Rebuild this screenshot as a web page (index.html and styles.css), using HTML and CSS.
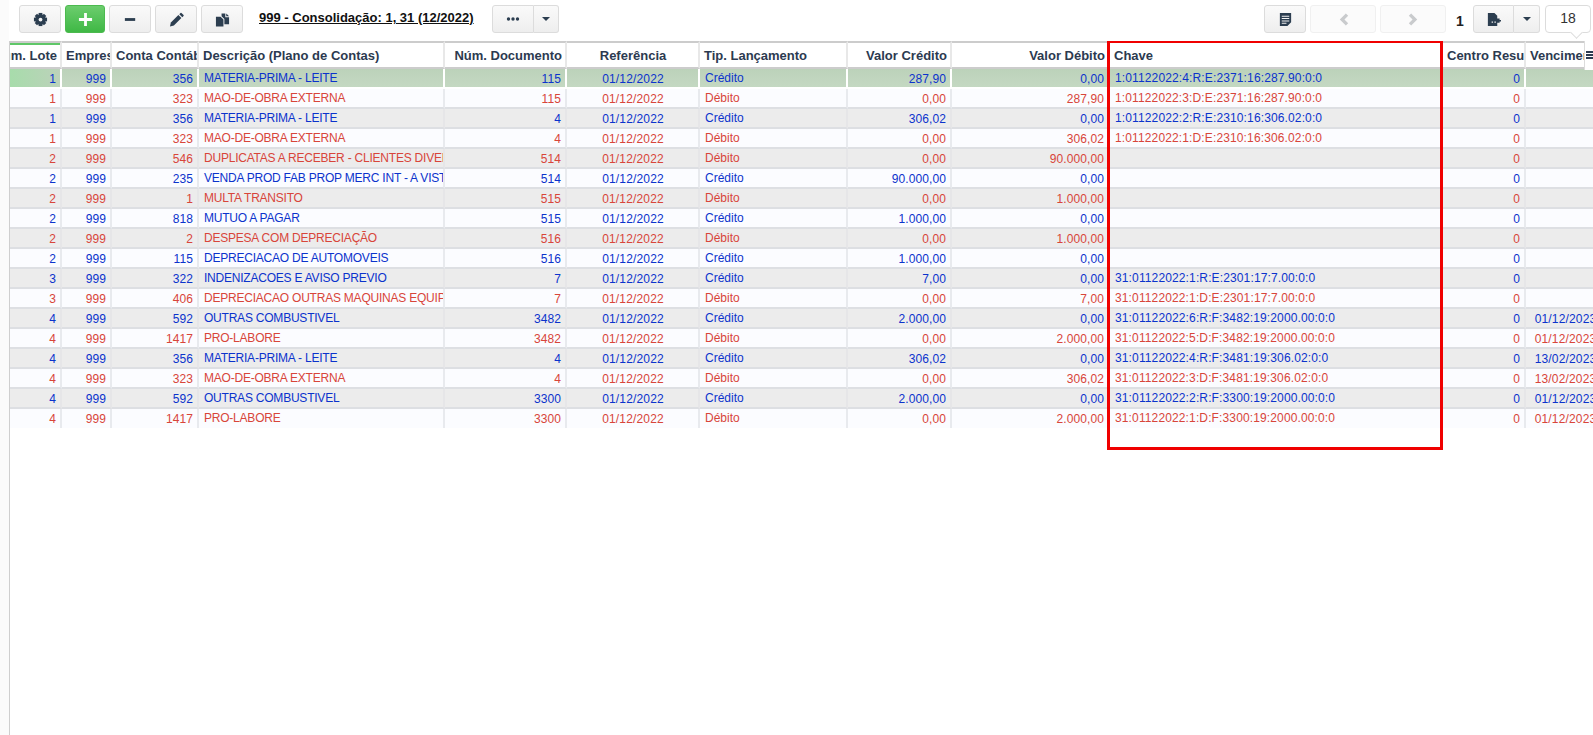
FILE: index.html
```html
<!DOCTYPE html>
<html lang="pt-BR">
<head>
<meta charset="utf-8">
<title>Consolidação</title>
<link rel="stylesheet" href="styles.css">
</head>
<body>
<header class="toolbar">
  <button class="btn w42"><svg class="ico" viewBox="0 0 16 16"><circle cx="8" cy="8" r="5.6"/><rect x="6" y="1" width="4" height="14"/><rect x="1" y="6" width="14" height="4"/><rect x="6.200" y="1" width="3.600" height="14" transform="rotate(45 8 8)"/><rect x="6.200" y="1" width="3.600" height="14" transform="rotate(-45 8 8)"/><circle class="hole" cx="8" cy="8" r="2"/></svg></button>
  <button class="btn btn-green"><svg class="ico" viewBox="0 0 16 16"><path class="white" d="M6.500 1h3v5.500h5.500v3H9.500V15h-3V9.500H1v-3h5.500z"/></svg></button>
  <button class="btn w42"><svg class="ico" viewBox="0 0 16 16"><rect x="2" y="6.500" width="11" height="3"/></svg></button>
  <button class="btn w42"><svg class="ico" viewBox="0 0 16 16"><path d="M1 15.500l1-4.200 8-8 3.200 3.200-8 8z"/><path d="M11 2.300l1.300-1.300q.5-.5 1 0l2.200 2.200q.5.5 0 1L14.200 5.500z"/></svg></button>
  <button class="btn w42"><svg class="ico" viewBox="0 0 16 16"><path d="M1 5h5l3 3v7.500H1z"/><path d="M7 1.500h4v4h4V13h-5V7.500L7 4.500z"/><path d="M12 1.500l3 3h-3z"/></svg></button>
  <h1 class="title">999 - Consolidação: 1, 31 (12/2022)</h1>
  <div class="group">
    <button class="btn w42 join-l"><svg class="ico small" viewBox="0 0 16 6"><circle cx="3.500" cy="3" r="1.700"/><circle cx="8" cy="3" r="1.700"/><circle cx="12.500" cy="3" r="1.700"/></svg></button>
    <button class="btn w25 join-r"><span class="caret"></span></button>
  </div>
  <div class="right">
    <button class="btn w42"><svg class="ico" viewBox="0 0 16 16"><path fill-rule="evenodd" d="M2 1h12v10l-4 4H2zM4 4v1h8V4zM4 6.500v1h8v-1zM4 9v1h8V9zM4 11.500v1h5v-1z"/></svg></button>
    <button class="btn btn-off w66"><svg class="ico mute" viewBox="0 0 16 16"><path d="M10.500 1.500L13 4 9 8l4 4-2.500 2.500L4 8z"/></svg></button>
    <button class="btn btn-off w66"><svg class="ico mute" viewBox="0 0 16 16"><path d="M5.500 1.500L3 4l4 4-4 4 2.500 2.500L12 8z"/></svg></button>
    <span class="page-no">1</span>
    <div class="group">
      <button class="btn w41 join-l"><svg class="ico" viewBox="0 0 16 16"><path fill-rule="evenodd" d="M2 1h7l3 3v3h2.500v1.500H16V10h-1.500v1.500H12V15H2zM6 10v1.500h1.500V10zM9 10v1.500h1.500V10z"/></svg></button>
      <button class="btn w26 join-r"><span class="caret"></span></button>
    </div>
    <div class="count">18</div>
  </div>
</header>

<main class="grid">
  <table class="sheet">
    <colgroup>
      <col class="c-lote"><col class="c-emp"><col class="c-conta"><col class="c-desc"><col class="c-doc"><col class="c-ref"><col class="c-tip"><col class="c-cred"><col class="c-deb"><col class="c-key"><col class="c-centro"><col class="c-venc">
    </colgroup>
    <thead>
      <tr>
        <th class="active"><div class="clip-left">Núm. Lote</div></th>
        <th>Empresa</th>
        <th>Conta Contábil</th>
        <th>Descrição (Plano de Contas)</th>
        <th class="r">Núm. Documento</th>
        <th class="m">Referência</th>
        <th>Tip. Lançamento</th>
        <th class="r">Valor Crédito</th>
        <th class="r">Valor Débito</th>
        <th>Chave</th>
        <th>Centro Resultado</th>
        <th>Vencimento</th>
      </tr>
    </thead>
    <tbody>
      <tr class="cred sel"><td class="n first">1</td><td class="n">999</td><td class="n">356</td><td class="t">MATERIA-PRIMA - LEITE</td><td class="n">115</td><td class="dt">01/12/2022</td><td>Crédito</td><td class="n">287,90</td><td class="n">0,00</td><td class="k">1:01122022:4:R:E:2371:16:287.90:0:0</td><td class="n">0</td><td class="dt"></td></tr>
      <tr class="deb"><td class="n">1</td><td class="n">999</td><td class="n">323</td><td class="t">MAO-DE-OBRA EXTERNA</td><td class="n">115</td><td class="dt">01/12/2022</td><td>Débito</td><td class="n">0,00</td><td class="n">287,90</td><td class="k">1:01122022:3:D:E:2371:16:287.90:0:0</td><td class="n">0</td><td class="dt"></td></tr>
      <tr class="cred"><td class="n">1</td><td class="n">999</td><td class="n">356</td><td class="t">MATERIA-PRIMA - LEITE</td><td class="n">4</td><td class="dt">01/12/2022</td><td>Crédito</td><td class="n">306,02</td><td class="n">0,00</td><td class="k">1:01122022:2:R:E:2310:16:306.02:0:0</td><td class="n">0</td><td class="dt"></td></tr>
      <tr class="deb"><td class="n">1</td><td class="n">999</td><td class="n">323</td><td class="t">MAO-DE-OBRA EXTERNA</td><td class="n">4</td><td class="dt">01/12/2022</td><td>Débito</td><td class="n">0,00</td><td class="n">306,02</td><td class="k">1:01122022:1:D:E:2310:16:306.02:0:0</td><td class="n">0</td><td class="dt"></td></tr>
      <tr class="deb"><td class="n">2</td><td class="n">999</td><td class="n">546</td><td class="t">DUPLICATAS A RECEBER - CLIENTES DIVERSOS</td><td class="n">514</td><td class="dt">01/12/2022</td><td>Débito</td><td class="n">0,00</td><td class="n">90.000,00</td><td class="k"></td><td class="n">0</td><td class="dt"></td></tr>
      <tr class="cred"><td class="n">2</td><td class="n">999</td><td class="n">235</td><td class="t">VENDA PROD FAB PROP MERC INT - A VISTA</td><td class="n">514</td><td class="dt">01/12/2022</td><td>Crédito</td><td class="n">90.000,00</td><td class="n">0,00</td><td class="k"></td><td class="n">0</td><td class="dt"></td></tr>
      <tr class="deb"><td class="n">2</td><td class="n">999</td><td class="n">1</td><td class="t">MULTA TRANSITO</td><td class="n">515</td><td class="dt">01/12/2022</td><td>Débito</td><td class="n">0,00</td><td class="n">1.000,00</td><td class="k"></td><td class="n">0</td><td class="dt"></td></tr>
      <tr class="cred"><td class="n">2</td><td class="n">999</td><td class="n">818</td><td class="t">MUTUO A PAGAR</td><td class="n">515</td><td class="dt">01/12/2022</td><td>Crédito</td><td class="n">1.000,00</td><td class="n">0,00</td><td class="k"></td><td class="n">0</td><td class="dt"></td></tr>
      <tr class="deb"><td class="n">2</td><td class="n">999</td><td class="n">2</td><td class="t">DESPESA COM DEPRECIAÇÃO</td><td class="n">516</td><td class="dt">01/12/2022</td><td>Débito</td><td class="n">0,00</td><td class="n">1.000,00</td><td class="k"></td><td class="n">0</td><td class="dt"></td></tr>
      <tr class="cred"><td class="n">2</td><td class="n">999</td><td class="n">115</td><td class="t">DEPRECIACAO DE AUTOMOVEIS</td><td class="n">516</td><td class="dt">01/12/2022</td><td>Crédito</td><td class="n">1.000,00</td><td class="n">0,00</td><td class="k"></td><td class="n">0</td><td class="dt"></td></tr>
      <tr class="cred"><td class="n">3</td><td class="n">999</td><td class="n">322</td><td class="t">INDENIZACOES E AVISO PREVIO</td><td class="n">7</td><td class="dt">01/12/2022</td><td>Crédito</td><td class="n">7,00</td><td class="n">0,00</td><td class="k">31:01122022:1:R:E:2301:17:7.00:0:0</td><td class="n">0</td><td class="dt"></td></tr>
      <tr class="deb"><td class="n">3</td><td class="n">999</td><td class="n">406</td><td class="t">DEPRECIACAO OUTRAS MAQUINAS EQUIP</td><td class="n">7</td><td class="dt">01/12/2022</td><td>Débito</td><td class="n">0,00</td><td class="n">7,00</td><td class="k">31:01122022:1:D:E:2301:17:7.00:0:0</td><td class="n">0</td><td class="dt"></td></tr>
      <tr class="cred"><td class="n">4</td><td class="n">999</td><td class="n">592</td><td class="t">OUTRAS COMBUSTIVEL</td><td class="n">3482</td><td class="dt">01/12/2022</td><td>Crédito</td><td class="n">2.000,00</td><td class="n">0,00</td><td class="k">31:01122022:6:R:F:3482:19:2000.00:0:0</td><td class="n">0</td><td class="dt">01/12/2023</td></tr>
      <tr class="deb"><td class="n">4</td><td class="n">999</td><td class="n">1417</td><td class="t">PRO-LABORE</td><td class="n">3482</td><td class="dt">01/12/2022</td><td>Débito</td><td class="n">0,00</td><td class="n">2.000,00</td><td class="k">31:01122022:5:D:F:3482:19:2000.00:0:0</td><td class="n">0</td><td class="dt">01/12/2023</td></tr>
      <tr class="cred"><td class="n">4</td><td class="n">999</td><td class="n">356</td><td class="t">MATERIA-PRIMA - LEITE</td><td class="n">4</td><td class="dt">01/12/2022</td><td>Crédito</td><td class="n">306,02</td><td class="n">0,00</td><td class="k">31:01122022:4:R:F:3481:19:306.02:0:0</td><td class="n">0</td><td class="dt">13/02/2023</td></tr>
      <tr class="deb"><td class="n">4</td><td class="n">999</td><td class="n">323</td><td class="t">MAO-DE-OBRA EXTERNA</td><td class="n">4</td><td class="dt">01/12/2022</td><td>Débito</td><td class="n">0,00</td><td class="n">306,02</td><td class="k">31:01122022:3:D:F:3481:19:306.02:0:0</td><td class="n">0</td><td class="dt">13/02/2023</td></tr>
      <tr class="cred"><td class="n">4</td><td class="n">999</td><td class="n">592</td><td class="t">OUTRAS COMBUSTIVEL</td><td class="n">3300</td><td class="dt">01/12/2022</td><td>Crédito</td><td class="n">2.000,00</td><td class="n">0,00</td><td class="k">31:01122022:2:R:F:3300:19:2000.00:0:0</td><td class="n">0</td><td class="dt">01/12/2023</td></tr>
      <tr class="deb"><td class="n">4</td><td class="n">999</td><td class="n">1417</td><td class="t">PRO-LABORE</td><td class="n">3300</td><td class="dt">01/12/2022</td><td>Débito</td><td class="n">0,00</td><td class="n">2.000,00</td><td class="k">31:01122022:1:D:F:3300:19:2000.00:0:0</td><td class="n">0</td><td class="dt">01/12/2023</td></tr>
    </tbody>
  </table>
  <div class="col-menu"><span class="bars"></span></div>
  <div class="highlight"></div>
</main>
</body>
</html>
```

FILE: styles.css
```css
* { box-sizing: border-box; }
html, body { height: 100%; }
body {
  margin: 0;
  overflow: hidden;
  background: #fbfbfb;
  font-family: "Liberation Sans", Arial, sans-serif;
  font-size: 12px;
  display: flex;
  flex-direction: column;
}

/* toolbar */
.toolbar {
  flex: 0 0 41px;
  margin-left: 9px;
  padding: 5px 2px 0 10px;
  background: #fff;
  display: flex;
  align-items: flex-start;
  gap: 4px;
}
.btn {
  height: 28px;
  width: 40px;
  padding: 0;
  border: 1px solid #dcdcdc;
  border-radius: 3px;
  background: linear-gradient(#fafafa, #eeeeee);
  display: flex;
  align-items: center;
  justify-content: center;
}
.w42 { width: 42px; }
.w41 { width: 41px; }
.w25 { width: 25px; }
.w26 { width: 26px; }
.w66 { width: 66px; }
.btn-green {
  border-color: #4cba4f;
  background: linear-gradient(#6ccd6e, #3fb845);
}
.btn-off {
  background: #fbfbfb;
  border-color: #f0f0f0;
}
.ico { width: 15px; height: 15px; fill: #2c3e50; display: block; }
.ico.small { width: 16px; height: 6px; }
.ico .hole { fill: #f4f4f4; }
.ico .white { fill: #fff; }
.ico.mute { fill: #c9cbcd; }
.title {
  margin: 0 14px 0 12px;
  padding-top: 5px;
  font-size: 13px;
  line-height: 16px;
  font-weight: 700;
  color: #111;
  text-decoration: underline;
  white-space: nowrap;
}
.group { display: flex; }
.join-l { border-radius: 3px 0 0 3px; }
.join-r { border-radius: 0 3px 3px 0; border-left: 0; }
.caret {
  width: 0;
  height: 0;
  border: 4px solid transparent;
  border-top: 4px solid #2c3e50;
  border-bottom: 0;
}
.right {
  margin-left: auto;
  display: flex;
  align-items: flex-start;
  gap: 4px;
}
.page-no {
  margin: 0 7px 0 6px;
  width: 6px;
  font-size: 14px;
  font-weight: 700;
  line-height: 32px;
  color: #222;
}
.count {
  position: relative;
  width: 46px;
  height: 28px;
  margin-left: 1px;
  background: #fff;
  border: 1px solid #dcdcdc;
  border-radius: 4px;
  font-size: 14px;
  line-height: 24px;
  text-align: center;
  color: #333;
}
.count::after {
  content: "";
  position: absolute;
  right: 9px;
  bottom: -5px;
  width: 8px;
  height: 8px;
  background: #fff;
  border-right: 1px solid #dcdcdc;
  border-bottom: 1px solid #dcdcdc;
  transform: rotate(45deg);
}

/* grid */
.grid {
  position: relative;
  flex: 1;
  margin-left: 9px;
  background: #fff;
  border-left: 1px solid #cfcfcf;
  overflow: hidden;
}
.sheet {
  width: 1596px;
  table-layout: fixed;
  border-collapse: separate;
  border-spacing: 0;
}
.c-lote { width: 52px; }
.c-emp { width: 50px; }
.c-conta { width: 87px; }
.c-desc { width: 246px; }
.c-doc { width: 122px; }
.c-ref { width: 133px; }
.c-tip { width: 148px; }
.c-cred { width: 104px; }
.c-deb { width: 158px; }
.c-key { width: 333px; }
.c-centro { width: 83px; }
.c-venc { width: 80px; }

th {
  height: 28px;
  padding: 0 3px 0 4px;
  border-top: 2px solid #cccccc;
  border-bottom: 2px solid #cccccc;
  border-right: 2px solid #e8e8e8;
  font-size: 13px;
  font-weight: 700;
  color: #2c3a50;
  text-align: left;
  white-space: nowrap;
  overflow: hidden;
}
th.r { text-align: right; }
th.m { text-align: center; }
th.active { position: relative; }
th.active::before {
  content: "";
  position: absolute;
  left: 0;
  right: -2px;
  top: 0;
  height: 2px;
  background: #5fc768;
}
.clip-left { display: flex; justify-content: flex-end; }

td {
  height: 20px;
  padding: 0 4px 1px 5px;
  border-bottom: 2px solid #dddfe3;
  border-right: 2px solid #e8eaee;
  background: #fbfcff;
  font-size: 12px;
  line-height: 16px;
  white-space: nowrap;
  overflow: hidden;
}
td.t { letter-spacing: -.22px; }
td.k { letter-spacing: .13px; }
td.n { text-align: right; padding-top: 1px; padding-bottom: 0; letter-spacing: .1px; }
td.dt { text-align: center; padding-top: 1px; padding-bottom: 0; letter-spacing: .15px; }
tr:nth-child(odd) td { background: #ececec; border-right-color: #e6e6e8; }
tbody tr:last-child td { height: 19px; border-bottom: 0; }
.cred td { color: #0b33cc; }
.deb td { color: #d8453a; }
tbody .sel td {
  background: linear-gradient(#bcd2ba, #c4d8c2);
  border-right-color: #fff;
  border-bottom-color: #fff;
}
tbody .sel td.first {
  background: linear-gradient(90deg, #a7dcab, #bcd2ba);
}

.col-menu {
  position: absolute;
  top: 0;
  right: 0;
  width: 9px;
  height: 29px;
  background: #fff;
  border-left: 1px solid #dcdcdc;
}
.bars {
  position: absolute;
  left: 1px;
  top: 10px;
  width: 10px;
  height: 8px;
  background: linear-gradient(#2c3a50 0 2px, transparent 2px 3px, #2c3a50 3px 5px, transparent 5px 6px, #2c3a50 6px 8px);
}
.highlight {
  position: absolute;
  left: 1097px;
  top: -1px;
  width: 336px;
  height: 410px;
  border: 3px solid #f00000;
  pointer-events: none;
}
```
